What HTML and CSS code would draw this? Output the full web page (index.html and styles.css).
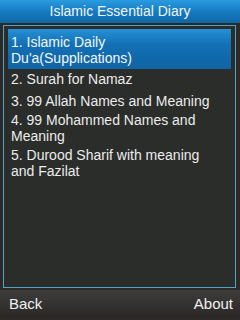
FILE: index.html
```html
<!DOCTYPE html>
<html lang="en">
<head>
  <meta charset="UTF-8" />
  <meta name="viewport" content="width=device-width, initial-scale=1.0"/>
  <title>Islamic Essential Diary</title>
  <link rel="stylesheet" href="styles.css">
</head>
<body>
  <div class="screen">
    <div class="title-bar">Islamic Essential Diary</div>

    <div class="frame">
      <ul class="menu">
        <li class="item selected">1. Islamic Daily Du'a(Supplications)</li>
        <li class="item">2. Surah for Namaz</li>
        <li class="item">3. 99 Allah Names and Meaning</li>
        <li class="item">4. 99 Mohammed Names and Meaning</li>
        <li class="item">5. Durood Sharif with meaning and Fazilat</li>
      </ul>
    </div>

    <!-- Soft keys -->
    <div class="soft-keys">
      <span>Back</span>
      <span>About</span>
    </div>
  </div>
</body>
</html>
```

FILE: styles.css
```css
body {
  margin: 0;
  background: #2c2926;
  font-family: "Liberation Sans", Arial, sans-serif;
  color: #ececec;
}

.screen {
  width: 240px;
  height: 320px;
  display: flex;
  flex-direction: column;
}

.title-bar {
  height: 23px;
  line-height: 23px;
  text-align: center;
  font-size: 14px;
  color: #f2f6fa;
  background: linear-gradient(#2a9be0, #1578bf 55%, #0f67a6);
}

.frame {
  flex: 1;
  margin: 2px 4px 2px 3px;
  border: 1px solid #4ea3c6;
  background: #2a2d2a;
  padding: 3px 4px;
}

.menu {
  list-style: none;
  margin: 0;
  padding: 0;
}

.item {
  font-size: 14px;
  line-height: 16px;
  padding: 2px 12px 1px 3px;
}

.item:nth-child(2) {
  margin-bottom: 3px;
}

.item.selected {
  padding: 5px 12px 3px 3px;
  color: #f4f8fb;
  background: linear-gradient(#2590d6, #136fb4 40%, #0f64a5);
}

.soft-keys {
  height: 26px;
  margin-bottom: 4px;
  display: flex;
  justify-content: space-between;
  align-items: center;
  padding: 0 7px 0 9px;
  font-size: 15px;
  color: #f0f0f0;
  background: linear-gradient(#3e3d3b, #343331 50%, #2a2928);
}
```
